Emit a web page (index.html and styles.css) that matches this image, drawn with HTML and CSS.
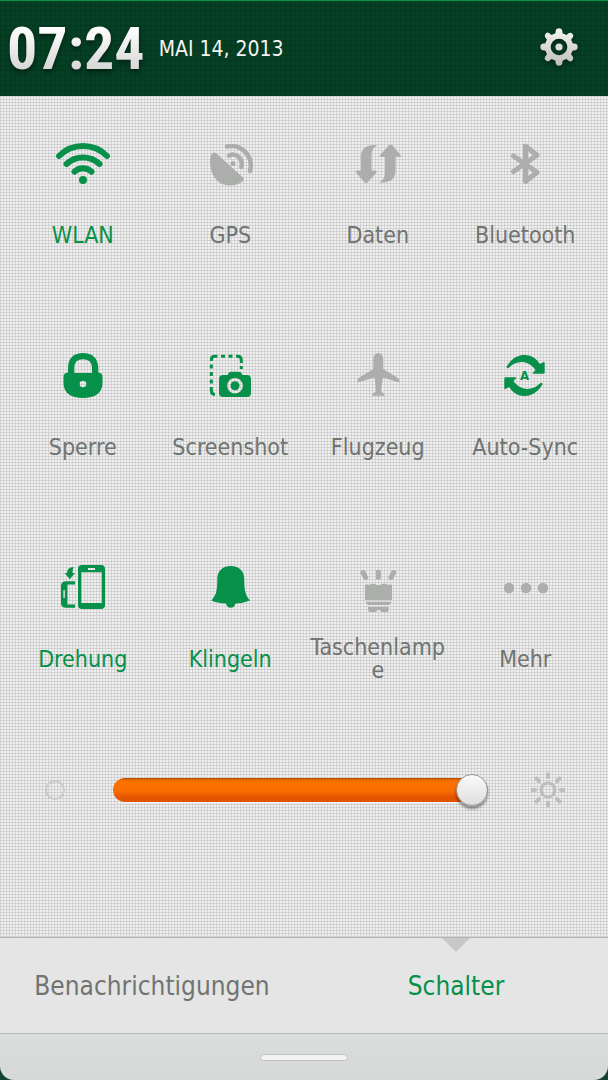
FILE: index.html
```html
<!DOCTYPE html>
<html lang="de">
<head>
<meta charset="utf-8">
<meta name="viewport" content="width=device-width, initial-scale=1">
<title>Schalter</title>
<link rel="stylesheet" href="styles.css">
</head>
<body>
<div class="shade">
  <header class="status">
    <time class="clock" datetime="07:24">07:24</time>
    <time class="date" datetime="2013-05-14">MAI 14, 2013</time>
    <button class="settings" type="button" aria-label="Einstellungen">
      <svg width="40" height="40" viewBox="0 0 40 40">
        <defs><linearGradient id="steel" x1="0" y1="0" x2="0" y2="1"><stop offset="0" stop-color="#f6f6f6"/><stop offset="1" stop-color="#bdbdbd"/></linearGradient></defs>
        <mask id="hole"><rect width="40" height="40" fill="#fff"/><circle cx="20" cy="20" r="8.3" fill="#000"/></mask>
        <g fill="url(#steel)" mask="url(#hole)">
          <circle cx="20" cy="20" r="14"/>
          <path d="M16.8 3.2Q17.3 1.3 20 1.3T23.2 3.2L23.8 7.2L26.7 8.4L30 6Q31.8 5.2 33.4 6.7T34 10L31.6 13.4L32.8 16.2L36.8 16.8Q38.7 17.3 38.7 20T36.8 23.2L32.8 23.8L31.6 26.6L34 30Q34.8 31.8 33.3 33.4T30 34L26.7 31.6L23.8 32.8L23.2 36.8Q22.7 38.7 20 38.7T16.8 36.8L16.2 32.8L13.3 31.6L10 34Q8.2 34.8 6.6 33.3T6 30L8.4 26.6L7.2 23.8L3.2 23.2Q1.3 22.7 1.3 20T3.2 16.8L7.2 16.2L8.4 13.4L6 10Q5.2 8.2 6.7 6.6T10 6L13.3 8.4L16.2 7.2Z"/>
        </g>
        <circle cx="20" cy="20" r="3.6" fill="#dedede"/>
      </svg>
    </button>
  </header>

  <main class="panel">
    <div class="tiles">
      <button class="tile on" type="button">
        <svg class="icon" viewBox="0 0 56 48"><g class="line" stroke-width="6"><path d="M4 16A34 34 0 0 1 52 16M11.5 24A24 24 0 0 1 44.5 24M19.5 31.7A12 12 0 0 1 36.5 31.7"/></g><circle cx="28" cy="40" r="4"/></svg>
        <span class="label">WLAN</span>
      </button>
      <button class="tile" type="button">
        <svg class="icon" viewBox="0 0 56 48"><path d="M9.500 14Q12 11.500 14.500 13.500L41 37.500Q42.500 39.500 40.500 41.500C33 47.500 21 46.500 15 40.500S6 22 9.500 14Z"/><circle cx="31" cy="23.500" r="2.600"/><path class="line" stroke-width="4.500" d="M27 15.700C34 12 41.500 19 39.300 27M25 6.500C39 3.500 52 15.500 48 31"/></svg>
        <span class="label">GPS</span>
      </button>
      <button class="tile" type="button">
        <svg class="icon" viewBox="0 0 56 48"><path id="swap" d="M27.500 5C22.500 8 21.500 11 21.500 17V30.500H26Q27.500 31 26.500 32.500L17.500 42.500Q16 43.500 14.500 42.500L6 32.500Q5 31 6.500 30.500H11V17C11 8 17 4.500 27.500 5Z"/><use href="#swap" transform="rotate(180 28.300 23.700)"/></svg>
        <span class="label">Daten</span>
      </button>
      <button class="tile" type="button">
        <svg class="icon" viewBox="0 0 56 48"><path class="line" stroke-width="5" d="M16.500 16L40 32.300L28.500 41.500V6L40 15.300L16.500 31.500"/></svg>
        <span class="label">Bluetooth</span>
      </button>

      <button class="tile lit" type="button">
        <svg class="icon" viewBox="0 0 56 48"><path fill-rule="evenodd" d="M13 20.500V16C13 6 19 1 28 1S43.300 6 43.300 16V20.500Q47.500 21 47.500 24.500V31C47.500 41 40 46 28 46S8.500 41 8.500 31V24.500Q8.500 21 13 20.500ZM19.300 21H37V16C37 10 33 7.300 28 7.300S19.300 10 19.300 16ZM31.300 32A3.300 3.300 0 1 0 24.700 32A3.300 3.300 0 1 0 31.300 32Z"/></svg>
        <span class="label">Sperre</span>
      </button>
      <button class="tile lit" type="button">
        <svg class="icon" viewBox="0 0 56 48"><path class="dash" d="M39.300 17V14M39.300 11V8Q39.300 4.300 35.500 4.300H34M30.500 4.300H26.500M23 4.300H19M15.500 4.300H13Q9.300 4.300 9.300 8V9M9.300 12.500V16.500M9.300 20V24M9.300 27.500V31.500M9.300 35V38.500Q9.300 42.300 13 42.500"/><path fill-rule="evenodd" d="M21 23H25.500L27 20.500Q27.500 19.700 29 19.700H37Q38.500 19.700 39 20.500L40.500 23H45Q49 23 49 27V41Q49 45 45 45H21Q17 45 17 41V27Q17 23 21 23ZM33 26A7.800 7.800 0 1 0 33 41.600A7.800 7.800 0 1 0 33 26Z"/><circle cx="33" cy="33.800" r="4.500"/></svg>
        <span class="label">Screenshot</span>
      </button>
      <button class="tile" type="button">
        <svg class="icon" viewBox="0 0 56 48"><path d="M28.300 1C31.500 1 33.300 4 33.300 8V17L48 26Q50 27.500 49.500 30.500L33 25.500L31 39L34.500 42.300V44L29.300 43.500L28.300 46L27.300 43.500L22.300 44V42.300L26 39L24.500 25.500L7.500 30.500Q7 27.500 8.500 26L23.300 17V8C23.300 4 25 1 28.300 1Z"/></svg>
        <span class="label">Flugzeug</span>
      </button>
      <button class="tile lit" type="button">
        <svg class="icon" viewBox="0 0 56 48"><path id="turn" d="M9.500 14.500C15 6 21 3 27.500 3C34 3 39 6 43 12L46.500 10Q47.700 9.500 47.700 11V20.500Q47.700 21.700 46.500 21.700H36.500Q35 21.500 36 20.500L38.500 18C31 7.500 19 8 11.500 16Q9.500 17 9.500 14.500Z"/><use href="#turn" transform="rotate(180 27.500 23.500)"/><text class="auto" x="27.500" y="28" text-anchor="middle">A</text></svg>
        <span class="label">Auto-Sync</span>
      </button>

      <button class="tile on" type="button">
        <svg class="icon" viewBox="0 0 56 48"><path fill-rule="evenodd" d="M27 1H46Q50 1 50 5V41Q50 45 46 45H27Q23 45 23 41V5Q23 1 27 1ZM26.300 8.300V39H46.700V8.300ZM33 4V6H40V4Z"/><path fill-rule="evenodd" d="M20 17.300V20.500H12.500V40.500H20V43.700H11Q6 43.700 6 39V22Q6 17.300 11 17.300ZM8.300 26V34H9.800V26Z"/><path d="M18.700 3Q17.500 5.500 17.500 9H20L14.800 15.200L9.500 9H12Q12 3 18.700 3Z"/></svg>
        <span class="label">Drehung</span>
      </button>
      <button class="tile on" type="button">
        <svg class="icon" viewBox="0 0 56 48"><path d="M28.700 2C38 2 42.300 8 42.300 15C42.300 26 43 31 48 36.500Q42 39 33.500 39.500Q32.500 43.700 28.700 43.700T24 39.500Q15 39 9.300 36.500C14.500 31 15.300 26 15.300 15C15.300 8 19.500 2 28.700 2Z"/></svg>
        <span class="label">Klingeln</span>
      </button>
      <button class="tile" type="button">
        <svg class="icon" viewBox="0 0 56 48"><path class="line" stroke-width="5" d="M13 8.500L15.700 13.500M28.300 8V13.500M43.700 8.500L41 13.500"/><path d="M15 21Q17 19.500 19 21Q23 18 27 21H30Q34 18 38 21Q40 19.500 42 21V36H15ZM15.500 37.800H41.500L39 41H18ZM18 43H38.700V46Q38.700 48 36.500 48H31.500L29.500 46H27.500L26 48H20.500Q18 48 18 46Z"/></svg>
        <span class="label">Taschenlampe</span>
      </button>
      <button class="tile" type="button">
        <svg class="icon" viewBox="0 0 56 48"><circle cx="12" cy="24" r="5.200"/><circle cx="29" cy="24" r="5.200"/><circle cx="46" cy="24" r="5.200"/></svg>
        <span class="label">Mehr</span>
      </button>
    </div>

    <div class="brightness">
      <svg class="dim" viewBox="0 0 36 36"><circle cx="18" cy="18" r="9"/></svg>
      <input class="slider" type="range" min="0" max="100" value="100" aria-label="Helligkeit">
      <svg class="bright" viewBox="0 0 40 40"><circle cx="20" cy="20" r="7"/><path d="M20 4.500V7M20 33V35.500M4.500 20H7M33 20H35.500M8.500 8.500L11 11M29 29L31.500 31.500M8.500 31.500L11 29M29 11L31.500 8.500"/></svg>
    </div>
  </main>

  <nav class="tabs">
    <button class="tab" type="button">Benachrichtigungen</button>
    <button class="tab current" type="button" aria-current="page">Schalter</button>
  </nav>
  <footer class="grip"><span class="bar"></span></footer>
</div>
</body>
</html>
```

FILE: styles.css
```css
* { box-sizing: border-box; }

body {
  margin: 0;
  background: #14442f;
  font-family: "DejaVu Sans Condensed", "Noto Sans", sans-serif;
  color: #707472;
}

button {
  margin: 0;
  padding: 0;
  border: 0;
  background: none;
  font: inherit;
  color: inherit;
}

.shade {
  display: flex;
  flex-direction: column;
  min-height: 100vh;
}

.status {
  display: flex;
  align-items: center;
  height: 96px;
  padding: 0 29px 0 7px;
  border-top: 1px solid #07904a;
  background:
    repeating-linear-gradient(0deg, rgba(0, 20, 10, .15) 0 1px, transparent 1px 5px),
    repeating-linear-gradient(90deg, rgba(0, 20, 10, .15) 0 1px, transparent 1px 5px),
    #053f24;
  color: #f4f4f4;
}

.clock {
  font: bold 60px/72px "Liberation Sans Narrow", "Roboto Condensed", "DejaVu Sans Condensed", sans-serif;
  background: linear-gradient(#fff 20%, #d2d2d2 85%);
  background-clip: text;
  -webkit-background-clip: text;
  color: transparent;
  filter: drop-shadow(0 3px 2px rgba(0, 0, 0, .4));
}

.date {
  margin-left: 14px;
  font-size: 21px;
}

.settings {
  display: flex;
  margin-left: auto;
  margin-bottom: 4px;
  filter: drop-shadow(0 2px 2px rgba(0, 0, 0, .4));
}

.panel {
  flex: 1;
  padding-top: 44px;
  background:
    repeating-linear-gradient(0deg, rgba(190, 190, 190, .55) 0 1px, transparent 1px 3px),
    repeating-linear-gradient(90deg, rgba(190, 190, 190, .55) 0 1px, transparent 1px 3px),
    #f0f0f0;
}

.tiles {
  display: grid;
  grid-template-columns: repeat(4, minmax(0, 1fr));
  row-gap: 94px;
  padding: 0 9px;
}

.tile {
  display: flex;
  flex-direction: column;
  align-items: center;
  gap: 24px;
}

.icon {
  width: 56px;
  height: 48px;
  fill: #acaeac;
  stroke: none;
  color: #acaeac;
}

.on, .on .icon, .lit .icon { color: #07904a; }
.on .icon, .lit .icon { fill: #07904a; }

.line {
  fill: none;
  stroke: currentColor;
  stroke-linecap: round;
  stroke-linejoin: round;
}

.dash {
  fill: none;
  stroke: currentColor;
  stroke-width: 3px;
}

.auto { font: bold 13px "DejaVu Sans Condensed", sans-serif; }

.label {
  display: flex;
  align-items: center;
  justify-content: center;
  width: 100%;
  min-height: 46px;
  padding: 0 2px;
  font-size: 23px;
  line-height: 23px;
  text-align: center;
  overflow-wrap: anywhere;
}

.brightness {
  display: flex;
  align-items: center;
  gap: 40px;
  padding: 88px 40px 0 37px;
}

.dim, .bright {
  flex: none;
  width: 36px;
  height: 36px;
  fill: none;
  stroke: #bdbdbd;
  stroke-width: 3px;
  stroke-linecap: round;
}

.dim {
  stroke: #c9c9c9;
  stroke-width: 2px;
}

.bright {
  width: 40px;
  height: 40px;
  stroke-width: 4px;
}

.bright circle { stroke-width: 3px; }

.slider {
  flex: 1;
  min-width: 0;
  height: 32px;
  margin: 0;
  appearance: none;
  background: none;
}

.slider::-webkit-slider-runnable-track {
  height: 24px;
  border-radius: 12px;
  background: linear-gradient(#a84800 0, #ee6a00 2px, #fb7200 4px, #f96d00 55%, #e45300 80%, #e45300);
  box-shadow: 0 1px 0 #eef6fa;
}

.slider::-webkit-slider-thumb {
  appearance: none;
  width: 32px;
  height: 32px;
  margin-top: -4px;
  border: 1px solid #999;
  border-radius: 50%;
  background: linear-gradient(#fafafa, #dfdfdf);
  box-shadow: 0 3px 3px rgba(0, 0, 0, .4);
}

.tabs {
  display: grid;
  grid-template-columns: 1fr 1fr;
  height: 97px;
  border-top: 1px solid #b5b5b5;
  border-bottom: 1px solid #b9bbba;
  background: #e5e5e5;
  font-size: 26px;
}

.tab { position: relative; }

.current { color: #07904a; }

.current::before {
  content: "";
  position: absolute;
  top: 0;
  left: 50%;
  width: 28px;
  height: 14px;
  margin-left: -14px;
  background: #c8c8c8;
  clip-path: polygon(0 0, 100% 0, 50% 100%);
}

.grip {
  display: flex;
  align-items: center;
  justify-content: center;
  height: 46px;
  border-radius: 0 0 14px 14px;
  background: linear-gradient(#dcdedd, #d6d8d7);
}

.bar {
  width: 88px;
  height: 7px;
  border: 1px solid #bfc1c0;
  border-radius: 4px;
  background: #f2f2f2;
}
```
